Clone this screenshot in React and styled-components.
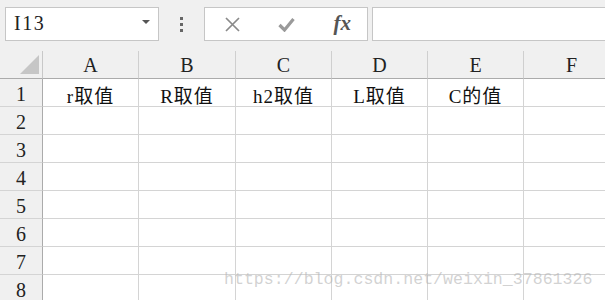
import React from 'react';
import styled, { createGlobalStyle } from 'styled-components';

const columns = ['A', 'B', 'C', 'D', 'E', 'F'];
const widths = [96, 97, 96, 96, 96, 96];
const firstRow = ['r取值', 'R取值', 'h2取值', 'L取值', 'C的值', ''];
const rows = [1, 2, 3, 4, 5, 6, 7, 8];

const App = () => {
    const template = `43px ${widths.map((w) => `${w}px`).join(' ')}`;

    return (
        <Page>
            <GlobalStyle />
            <Toolbar>
                <NameBox>
                    <span>I13</span>
                    <DropArrow />
                </NameBox>
                <Dots>
                    <i />
                    <i />
                    <i />
                </Dots>
                <FormulaButtons>
                    <IconSlot>
                        <svg width="15" height="15" viewBox="0 0 15 15">
                            <path d="M1 1 L14 14 M14 1 L1 14" stroke="#8a8a8a" strokeWidth="1.7" fill="none" />
                        </svg>
                    </IconSlot>
                    <IconSlot>
                        <svg width="17" height="15" viewBox="0 0 17 15">
                            <path d="M1.5 8 L6.5 13 L15.5 2" stroke="#9a9a9a" strokeWidth="3.2" fill="none" />
                        </svg>
                    </IconSlot>
                    <IconSlot>
                        <Fx>fx</Fx>
                    </IconSlot>
                </FormulaButtons>
                <FormulaInput />
            </Toolbar>

            <Sheet style={{ gridTemplateColumns: template }}>
                <Corner>
                    <Triangle />
                </Corner>
                {columns.map((c) => (
                    <ColHeader key={c}>{c}</ColHeader>
                ))}
                {rows.map((r) => (
                    <React.Fragment key={r}>
                        <RowHeader>{r}</RowHeader>
                        {columns.map((c, i) => (
                            <Cell key={c}>{r === 1 ? firstRow[i] : ''}</Cell>
                        ))}
                    </React.Fragment>
                ))}
            </Sheet>

            <Watermark>https://blog.csdn.net/weixin_37861326</Watermark>
        </Page>
    );
};

export default App;

// Styled components
const GlobalStyle = createGlobalStyle`
    html, body {
        margin: 0;
        padding: 0;
        background: #ffffff;
        overflow: hidden;
    }
    * {
        box-sizing: border-box;
    }
`;

const Page = styled.div`
    position: relative;
    width: 605px;
    height: 300px;
    overflow: hidden;
    font-family: 'Liberation Serif', 'Noto Sans CJK SC', serif;
    color: #1a1a1a;
`;

const Toolbar = styled.div`
    display: flex;
    align-items: flex-start;
    height: 51px;
    padding: 7px 0 0 5px;
    background: #f0f0f0;
    margin-right: -4px;
`;

const Box = styled.div`
    height: 34px;
    background: #ffffff;
    border: 1px solid #c6c6c6;
`;

const NameBox = styled(Box)`
    width: 154px;
    display: flex;
    align-items: center;
    justify-content: space-between;
    padding: 0 8px 1px 8px;
    font-size: 20px;
    letter-spacing: 1.5px;
    color: #222;
`;

const DropArrow = styled.span`
    width: 0;
    height: 0;
    margin-bottom: 3px;
    border-left: 4px solid transparent;
    border-right: 4px solid transparent;
    border-top: 4px solid #555;
`;

const Dots = styled.div`
    width: 45px;
    height: 34px;
    display: flex;
    flex-direction: column;
    align-items: center;
    justify-content: center;
    gap: 3px;

    i {
        display: block;
        width: 3px;
        height: 3px;
        background: #666;
    }
`;

const FormulaButtons = styled(Box)`
    width: 164px;
    display: flex;
    align-items: center;
    padding-left: 1px;
`;

const IconSlot = styled.div`
    width: 54px;
    display: flex;
    justify-content: center;
    align-items: center;
`;

const Fx = styled.span`
    font-family: 'Liberation Serif', serif;
    font-style: italic;
    font-weight: bold;
    font-size: 21px;
    color: #555;
    margin-left: 4px;
    margin-top: -2px;
`;

const FormulaInput = styled(Box)`
    flex: 1;
    margin-left: 4px;
`;

const Sheet = styled.div`
    display: grid;
    grid-auto-rows: 28px;
    background: #ffffff;
`;

const Corner = styled.div`
    display: flex;
    justify-content: flex-end;
    align-items: flex-end;
    padding: 0 3px 4px 0;
    background: #f0f0f0;
    border-right: 1px solid #c8c8c8;
    border-bottom: 1px solid #ababab;
`;

const Triangle = styled.span`
    width: 19px;
    height: 19px;
    background: #c6c6c6;
    clip-path: polygon(100% 0, 100% 100%, 0 100%);
`;

const ColHeader = styled.div`
    display: flex;
    align-items: center;
    justify-content: center;
    padding-top: 2px;
    background: #f0f0f0;
    border-right: 1px solid #cfcfcf;
    border-bottom: 1px solid #ababab;
    font-size: 20px;
    color: #222;
`;

const RowHeader = styled.div`
    display: flex;
    align-items: center;
    justify-content: center;
    padding-top: 4px;
    background: #f0f0f0;
    border-right: 1px solid #ababab;
    border-bottom: 1px solid #d4d4d4;
    font-size: 20px;
    color: #222;
`;

const Cell = styled.div`
    display: flex;
    align-items: center;
    justify-content: center;
    padding-top: 3px;
    border-right: 1px solid #d4d4d4;
    border-bottom: 1px solid #d4d4d4;
    font-size: 19px;
    letter-spacing: 1px;
    color: #111;
    white-space: nowrap;
`;

const Watermark = styled.div`
    position: absolute;
    left: 224px;
    top: 272px;
    font-family: 'Liberation Mono', monospace;
    font-size: 16.6px;
    line-height: 16px;
    color: rgba(180, 180, 180, 0.6);
    pointer-events: none;
`;
